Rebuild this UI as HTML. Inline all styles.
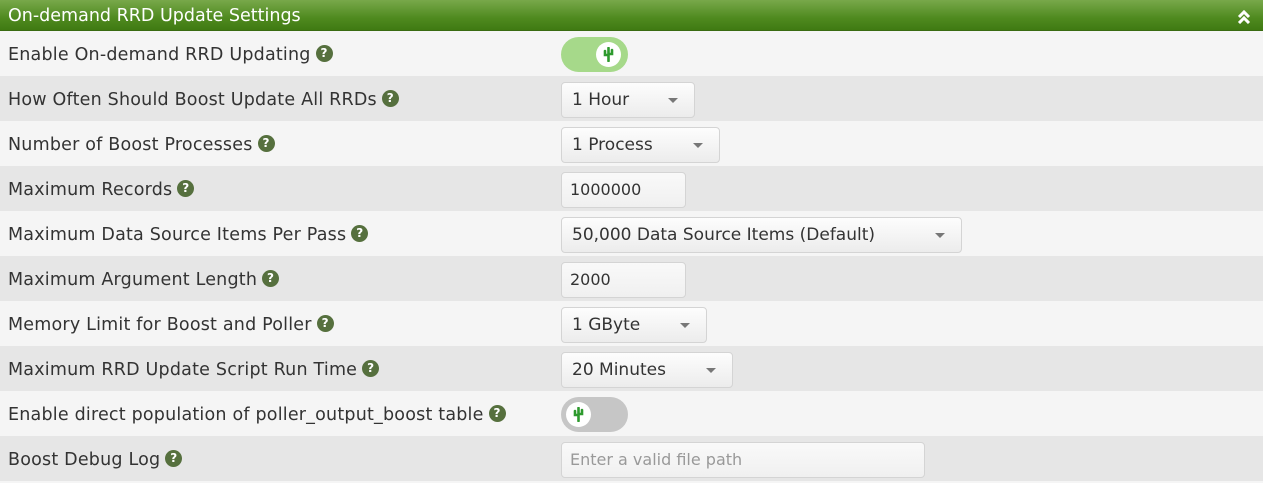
<!DOCTYPE html>
<html><head><style>
body{margin:0;width:1263px;height:475px;overflow:hidden;background:#f5f5f5;font-family:"DejaVu Sans","Liberation Sans",sans-serif;font-size:17.5px;color:#333}
.hdr{height:31px;background:linear-gradient(#78a84a,#4f8a1f 60%,#3f7a12);color:#fff;line-height:33px;padding-left:8px;font-size:17.5px;position:relative;border-bottom:1px solid #3a6b12;box-sizing:border-box}
.hdr svg{position:absolute;right:12px;top:10px}
.row{height:45px;position:relative;box-sizing:border-box}
.row:nth-child(even){background:#e6e6e6}
.row:nth-child(odd){background:#f5f5f5}
.lbl{position:absolute;left:8px;top:2px;line-height:45px;white-space:nowrap;letter-spacing:0.2px}
.q{display:inline-block;width:17px;height:17px;border-radius:50%;background:#56703e;color:#fff;font-size:12px;font-weight:bold;text-align:center;line-height:17px;vertical-align:middle;margin-left:5px;position:relative;top:-2px}
.ctl{position:absolute;left:561px;top:6px;height:36px;box-sizing:border-box;border:1px solid #d4d4d4;border-radius:4px;background:linear-gradient(#fdfdfd,#ececec);line-height:34px;padding-left:10px;font-size:17px}
.sel:after{content:"";position:absolute;right:16px;top:15px;border:5px solid transparent;border-top:5px solid #777}
.inp{background:linear-gradient(#f9f9f9,#f0f0f0);font-size:16px;padding-left:8px}
.tg{position:absolute;left:561px;top:6px;width:67px;height:35px;border-radius:18px}
.tg .k{position:absolute;top:5px;width:25px;height:25px;border-radius:50%;background:#fff}
.tg svg{position:absolute;left:7px;top:5px}
</style></head><body>
<div class="hdr">On-demand RRD Update Settings<svg width="14" height="14" viewBox="0 0 14 14"><path d="M2 7l5-5 5 5M2 13l5-5 5 5" stroke="#fff" stroke-width="3" fill="none"/></svg></div>
<div>
<div class="row"><span class="lbl">Enable On-demand RRD Updating<span class="q">?</span></span><div class="tg" style="background:#a6d98a"><div class="k" style="left:35px"><svg width="11" height="15" viewBox="0 0 11 15"><path d="M5.5 1v13M2 4v4h3.5M9 3v4H5.5" stroke="#2e9a2e" stroke-width="2.6" fill="none" stroke-linecap="round"/></svg></div></div></div>
<div class="row"><span class="lbl">How Often Should Boost Update All RRDs<span class="q">?</span></span><div class="ctl sel" style="width:134px">1 Hour</div></div>
<div class="row"><span class="lbl">Number of Boost Processes<span class="q">?</span></span><div class="ctl sel" style="width:159px">1 Process</div></div>
<div class="row"><span class="lbl">Maximum Records<span class="q">?</span></span><div class="ctl inp" style="width:125px">1000000</div></div>
<div class="row"><span class="lbl">Maximum Data Source Items Per Pass<span class="q">?</span></span><div class="ctl sel" style="width:401px">50,000 Data Source Items (Default)</div></div>
<div class="row"><span class="lbl">Maximum Argument Length<span class="q">?</span></span><div class="ctl inp" style="width:125px">2000</div></div>
<div class="row"><span class="lbl">Memory Limit for Boost and Poller<span class="q">?</span></span><div class="ctl sel" style="width:146px">1 GByte</div></div>
<div class="row"><span class="lbl">Maximum RRD Update Script Run Time<span class="q">?</span></span><div class="ctl sel" style="width:172px">20 Minutes</div></div>
<div class="row"><span class="lbl">Enable direct population of poller_output_boost table<span class="q">?</span></span><div class="tg" style="background:#c6c6c6"><div class="k" style="left:5px"><svg width="11" height="15" viewBox="0 0 11 15"><path d="M5.5 1v13M2 4v4h3.5M9 3v4H5.5" stroke="#2e9a2e" stroke-width="2.6" fill="none" stroke-linecap="round"/></svg></div></div></div>
<div class="row"><span class="lbl">Boost Debug Log<span class="q">?</span></span><div class="ctl inp" style="width:364px;color:#999">Enter a valid file path</div></div>
</div>
</body></html>
